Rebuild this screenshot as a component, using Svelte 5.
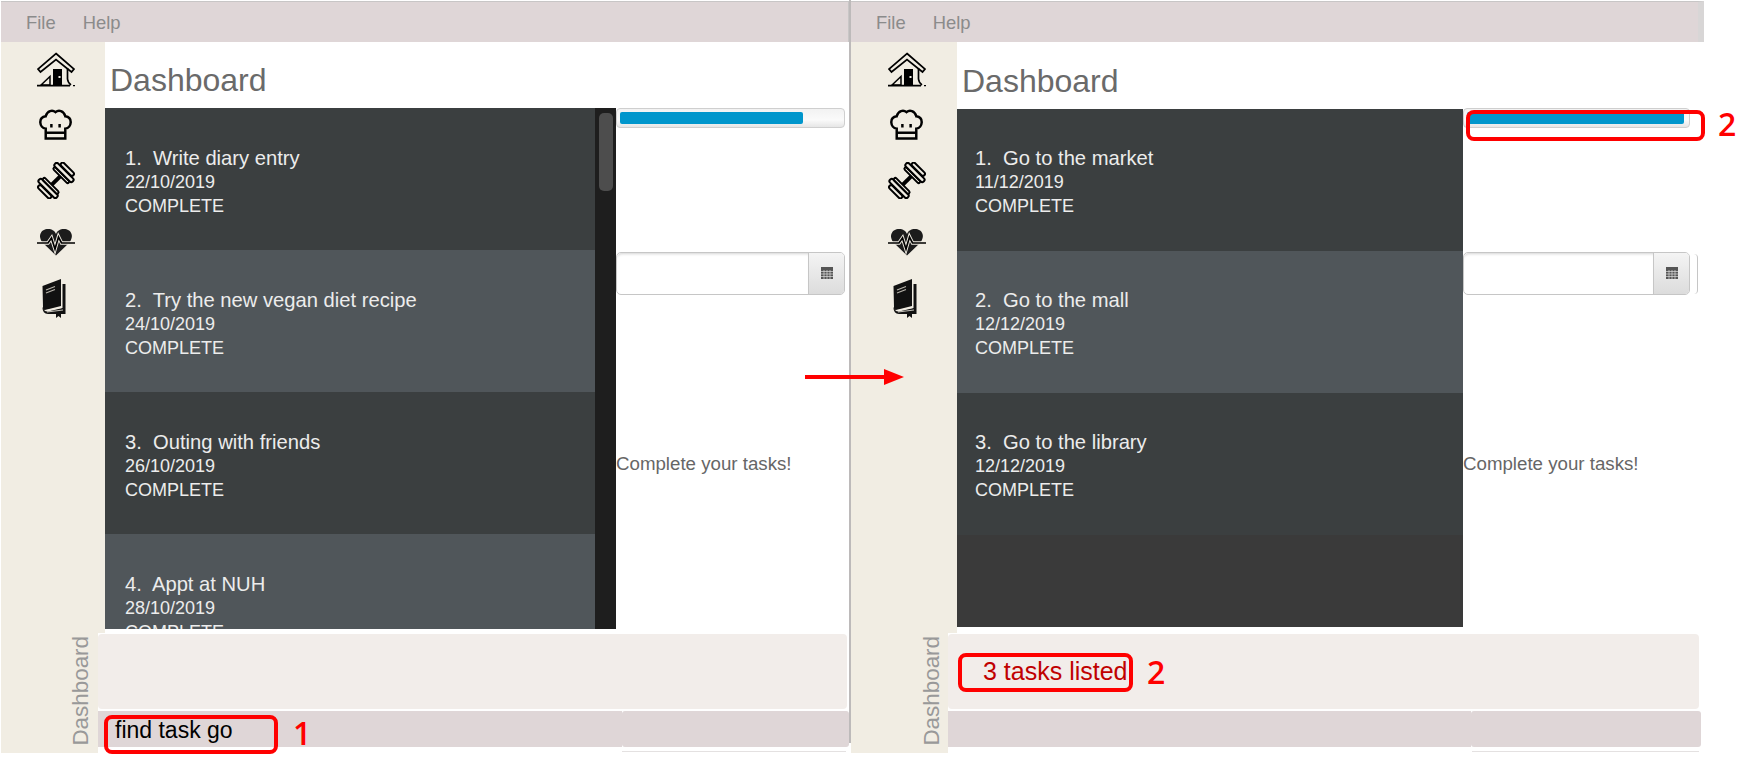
<script>
    // task data for both windows
    const before = [
        { title: '1.  Write diary entry', date: '22/10/2019' },
        { title: '2.  Try the new vegan diet recipe', date: '24/10/2019' },
        { title: '3.  Outing with friends', date: '26/10/2019' },
        { title: '4.  Appt at NUH', date: '28/10/2019' }
    ];
    const after = [
        { title: '1.  Go to the market', date: '11/12/2019' },
        { title: '2.  Go to the mall', date: '12/12/2019' },
        { title: '3.  Go to the library', date: '12/12/2019' }
    ];
</script>

{#snippet icons()}
    <nav class="icons">
        <!-- home -->
        <svg width="40" height="35" viewBox="0 0 40 35" fill="none" stroke="#000" stroke-width="1.7">
            <path d="M20 1.5 L38 17 L35.5 20 L20 7.5 L4.5 20 L2 17 Z" />
            <path d="M31.5 16 V27 Q32 31 35 33" />
            <path d="M5 33 L14 24.5 V33 Z" stroke-width="1.5" />
            <path d="M1 33.6 H34" stroke-width="1.6" />
            <path d="M37 33.6 H39" stroke-width="1.4" />
            <rect x="17" y="17" width="9" height="16" fill="#000" stroke="none" />
            <rect x="22.5" y="24" width="2" height="2" fill="#f1ede3" stroke="none" />
        </svg>
        <!-- chef hat -->
        <svg width="35" height="31" viewBox="0 0 34 30" fill="none" stroke="#000" stroke-width="2.4">
            <path d="M7.5 19 C1 18 0 8 7.5 7 C9 1.5 14 0.5 17 3 C20 0.5 25 1.5 26.5 7 C34 8 33 18 26.5 19 V28.5 H7.5 Z" />
            <path d="M7.5 23 H26.5" />
            <path d="M13 14.5 V18 M21 14.5 V18" />
        </svg>
        <!-- dumbbell -->
        <svg width="38" height="37" viewBox="0 0 38 37" fill="#f1ede3" stroke="#000" stroke-width="2">
            <g transform="rotate(-45 19 18.5)">
                <rect x="12" y="16.5" width="14" height="4" fill="#000" stroke="none" />
                <rect x="1" y="10" width="4" height="17" rx="2" />
                <rect x="5.5" y="6" width="4.5" height="25" rx="2" />
                <rect x="10" y="8" width="3" height="21" rx="1.5" />
                <rect x="25" y="8" width="3" height="21" rx="1.5" />
                <rect x="28" y="6" width="4.5" height="25" rx="2" />
                <rect x="33" y="10" width="4" height="17" rx="2" />
            </g>
        </svg>
        <!-- heart with pulse -->
        <svg width="38" height="28" viewBox="0 0 38 28" fill="none">
            <path d="M19 27.5 L6 15 C0 8 4 1 11 1 C15 1 18 3 19 6 C20 3 23 1 27 1 C34 1 38 8 32 15 Z" fill="#1c1c1c" />
            <path d="M0 15 H11 L14.5 10 L18 21 L21.5 9 L24.5 15 H38" stroke="#f1ede3" stroke-width="3.6" />
            <path d="M0 15 H11 L14.5 10 L18 21 L21.5 9 L24.5 15 H38" stroke="#000" stroke-width="1.7" />
        </svg>
        <!-- book -->
        <svg class="book" width="24" height="39" viewBox="0 0 24 39">
            <path d="M0.5 7 L19 0 V27 L5 30.5 Q0.5 32 1 28 Z" fill="#111" />
            <path d="M20.5 5 H23.5 V35 H19 V39 L16.5 37 L14 39 V35 H6 Q0.5 34.5 0.5 29 L1 28 Q2 33 6 32.5 L20.5 29 Z" fill="#111" />
            <path d="M4 31.5 L20 28.5 M5 33 L21 31" stroke="#f1ede3" stroke-width="0.8" fill="none" />
            <path d="M4 11 L13 7.5 M4 14 L13 10.5" stroke="#b9b5ac" stroke-width="1.2" fill="none" />
        </svg>
    </nav>
{/snippet}

{#snippet pane()}
    <aside class="pane">
        <div class="progress"><div class="fill"></div></div>
        <div class="picker">
            <span class="picker-input"></span>
            <span class="picker-btn">
                <svg width="12" height="12" viewBox="0 0 12 12">
                    <rect width="12" height="12" fill="#555" />
                    <path d="M0 4.5 H12 M0 7 H12 M0 9.5 H12 M3 3 V12 M6 3 V12 M9 3 V12" stroke="#ddd" stroke-width="0.7" />
                </svg>
            </span>
        </div>
        <p class="hint">Complete your tasks!</p>
    </aside>
{/snippet}

{#snippet app_window(side, tasks, result, command)}
    <section class="window {side}">
        <header class="menu">
            <span>File</span>
            <span>Help</span>
        </header>
        <div class="upper">
            {@render icons()}
            <main class="content">
                <h1>Dashboard</h1>
                <div class="columns">
                    <div class="list">
                        <div class="rows">
                            {#each tasks as task}
                                <article class="row">
                                    <p class="title">{task.title}</p>
                                    <p>{task.date}</p>
                                    <p>COMPLETE</p>
                                </article>
                            {/each}
                        </div>
                        {#if side === 'left'}
                            <div class="scrollbar"><div class="thumb"></div></div>
                        {/if}
                    </div>
                    {@render pane()}
                </div>
            </main>
        </div>
        <div class="lower">
            <div class="tab"><span>Dashboard</span></div>
            <div class="panels">
                <div class="result">{result}</div>
                <div class="command">
                    <div class="command-main">{command}</div>
                    <div class="command-side"></div>
                </div>
                <div class="tail"></div>
            </div>
        </div>
    </section>
{/snippet}

<div class="page">
    {@render app_window('left', before, '', 'find task go')}
    {@render app_window('right', after, '3 tasks listed!', '')}

    <!-- annotations drawn on top of the screenshots -->
    <div class="mark mark-command"></div>
    <span class="num num-1">1</span>
    <div class="mark mark-result"></div>
    <span class="num num-2a">2</span>
    <div class="mark mark-progress"></div>
    <span class="num num-2b">2</span>
    <svg class="arrow" width="99" height="20" viewBox="0 0 99 20">
        <path d="M0 10 H82" stroke="#f00" stroke-width="4" />
        <path d="M79 2 L99 10 L79 18 Z" fill="#f00" />
    </svg>
</div>

<style>
    :global(body) {
        margin: 0;
        background: #fff;
    }

    .page {
        position: relative;
        display: flex;
        width: 1764px;
        height: 779px;
        padding-left: 1px;
        box-sizing: border-box;
        overflow: hidden;
        font-family: "Liberation Sans", Arial, sans-serif;
    }

    p, h1 {
        margin: 0;
    }

    .window {
        display: flex;
        flex-direction: column;
        height: 753px;
    }

    .window.left {
        width: 850px;
    }

    .window.right {
        width: 853px;
        position: relative;
    }

    .window.right::before {
        content: "";
        position: absolute;
        left: -2px;
        top: 0;
        bottom: 10px;
        width: 2px;
        background: #bdbaba;
    }

    .menu {
        display: flex;
        gap: 27px;
        height: 41px;
        margin-top: 1px;
        padding: 3px 0 0 25px;
        align-items: center;
        box-sizing: border-box;
        background: #dfd6d7;
        border-top: 1px solid #c8c6c6;
        color: #8b8b8b;
        font-size: 18.4px;
    }

    .left .menu {
        margin-right: 2px;
        border-right: 1px solid #c8c6c6;
    }

    .right .menu {
        border-right: 6px solid #d8d6d6;
    }

    .upper {
        display: flex;
        height: 592px;
    }

    .icons {
        display: flex;
        flex-direction: column;
        align-items: center;
        flex: none;
        box-sizing: border-box;
        width: 104px;
        padding: 10px 0 0 5px;
        background: #f1ede3;
    }

    .right .icons {
        width: 106px;
        padding-left: 5px;
    }

    .icons svg:nth-child(2) { margin-top: 22px; }
    .icons svg:nth-child(3) { margin-top: 22px; }
    .icons svg:nth-child(4) { margin-top: 29px; }
    .icons svg:nth-child(5) { margin-top: 23px; }

    .icons .book {
        margin-left: -3px;
    }

    .content {
        display: flex;
        flex-direction: column;
        flex: 1;
        min-width: 0;
    }

    h1 {
        height: 66px;
        padding: 15px 0 0 5px;
        box-sizing: border-box;
        color: #6a6a6a;
        font-size: 32px;
        font-weight: normal;
        line-height: 46px;
    }

    .right h1 {
        height: 67px;
        padding-top: 16px;
    }

    .columns {
        display: flex;
        height: 521px;
    }

    .right .columns {
        height: 518px;
    }

    .list {
        display: flex;
        flex: none;
        width: 511px;
        overflow: hidden;
        background: #3a3a3a;
    }

    .right .list {
        width: 506px;
    }

    .rows {
        flex: 1;
        min-width: 0;
    }

    .row {
        height: 142px;
        padding: 38px 0 0 20px;
        box-sizing: border-box;
        background: #3b3f40;
        color: #ececec;
        font-size: 18px;
        line-height: 24px;
    }

    .row:nth-child(even) {
        background: #50565a;
    }

    .right .row {
        padding: 37px 0 0 18px;
    }

    .title {
        font-size: 20.2px;
        white-space: pre;
    }

    .scrollbar {
        flex: none;
        width: 21px;
        padding: 5px 3px 0 4px;
        box-sizing: border-box;
        background: #1e1e1e;
    }

    .thumb {
        height: 78px;
        border-radius: 5px;
        background: #4d4d4d;
    }

    .pane {
        display: flex;
        flex-direction: column;
        flex: none;
        width: 229px;
    }

    .right .pane {
        width: 227px;
    }

    .progress {
        height: 20px;
        padding: 3px;
        box-sizing: border-box;
        border: 1px solid #cfcfcf;
        border-radius: 4px;
        background: linear-gradient(#f2f2f2, #fafafa 60%, #e6e6e6);
    }

    .right .progress {
        margin-top: -1px;
    }

    .fill {
        width: 83%;
        height: 12px;
        border-radius: 2px;
        background: #0096cc;
    }

    .right .fill {
        width: 99%;
    }

    .picker {
        display: flex;
        position: relative;
        height: 43px;
        margin-top: 124px;
        border: 1px solid #c6c6c6;
        border-radius: 5px;
        box-sizing: border-box;
    }

    .right .picker::after {
        content: "";
        position: absolute;
        top: 1px;
        right: -9px;
        width: 3px;
        height: 40px;
        border-right: 1px solid #c6c6c6;
        border-radius: 0 4px 4px 0;
    }

    .picker-input {
        flex: 1;
        border-radius: 5px 0 0 5px;
        box-shadow: inset 0 3px 3px -2px #d4d4d4;
    }

    .picker-btn {
        display: flex;
        align-items: center;
        justify-content: center;
        width: 35px;
        border-left: 1px solid #c6c6c6;
        border-radius: 0 4px 4px 0;
        background: linear-gradient(#f4f4f4, #dcdcdc);
    }

    .hint {
        margin-top: 157px;
        color: #666;
        font-size: 18.7px;
        line-height: 24px;
    }

    .lower {
        display: flex;
        height: 120px;
    }

    .tab {
        display: flex;
        align-items: flex-end;
        justify-content: flex-end;
        flex: none;
        box-sizing: border-box;
        width: 97px;
        padding: 0 5px 7px 0;
        background: #f1ede3;
    }

    .right .tab {
        padding-right: 4px;
    }

    .tab span {
        writing-mode: vertical-rl;
        transform: rotate(180deg);
        color: #999;
        font-size: 22.4px;
        line-height: 24px;
    }

    .panels {
        flex: 1;
        min-width: 0;
        padding-top: 1px;
    }

    .result {
        display: flex;
        align-items: center;
        box-sizing: border-box;
        height: 75px;
        margin-right: 4px;
        padding: 0 0 0 35px;
        border-radius: 4px;
        background: #f2edea;
        color: #c00000;
        font-size: 25px;
    }

    .right .result {
        margin-right: 5px;
    }

    .command {
        display: flex;
        height: 36px;
        margin-top: 2px;
        margin-right: 2px;
    }

    .right .command {
        margin-right: 3px;
    }

    .command-main {
        width: 524px;
        padding-left: 17px;
        box-sizing: border-box;
        background: #dfd6d7;
        color: #000;
        font-size: 23px;
        line-height: 38px;
    }

    .command-side {
        flex: 1;
        border-radius: 3px;
        background: #dfd6d7;
    }

    .right .command-main {
        width: 523px;
    }

    .tail {
        height: 1px;
        margin: 4px 5px 0 524px;
        background: #e4e1e1;
    }

    .mark {
        position: absolute;
        box-sizing: border-box;
        border: 4px solid #f00;
        border-radius: 8px;
    }

    .mark-command {
        left: 104px;
        top: 715px;
        width: 174px;
        height: 39px;
    }

    .mark-result {
        left: 958px;
        top: 653px;
        width: 175px;
        height: 39px;
    }

    .mark-progress {
        left: 1466px;
        top: 110px;
        width: 239px;
        height: 31px;
    }

    .num {
        position: absolute;
        color: #f00;
        font-family: "Open Sans", sans-serif;
        font-size: 32px;
        font-weight: 600;
        line-height: 36px;
    }

    .num-1 { left: 293px; top: 715px; }
    .num-2a { left: 1147px; top: 654px; }
    .num-2b { left: 1718px; top: 106px; }

    .arrow {
        position: absolute;
        left: 805px;
        top: 367px;
    }
</style>
